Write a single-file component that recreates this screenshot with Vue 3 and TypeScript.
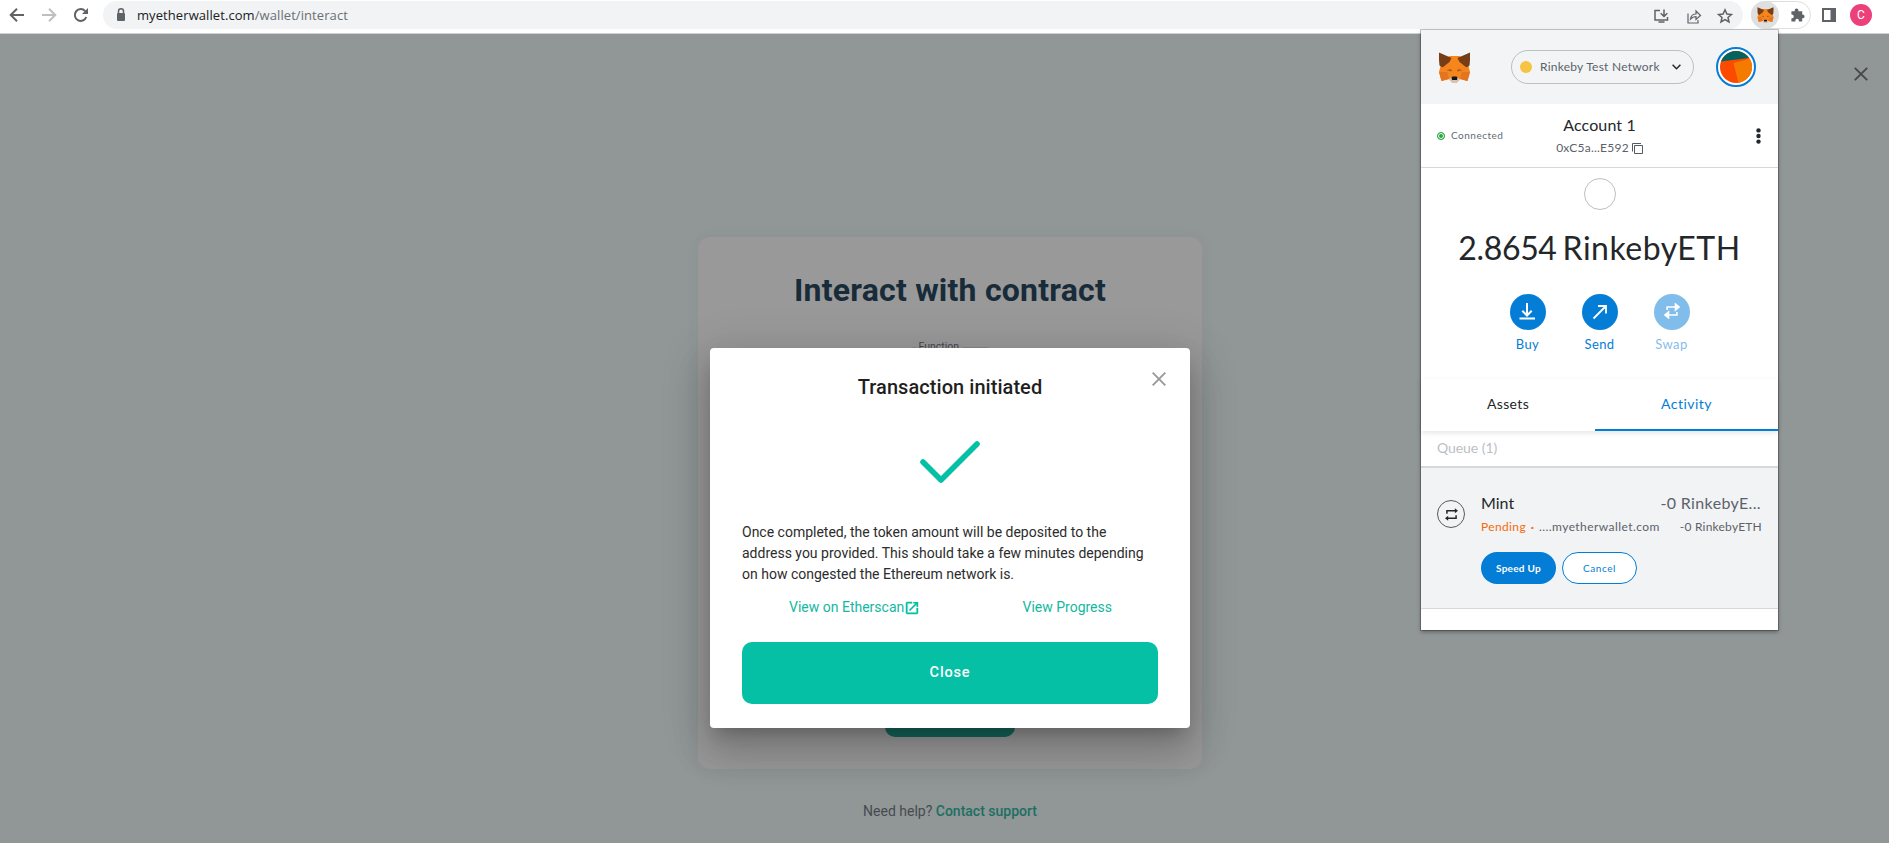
<script setup lang="ts">
interface WalletAction { label: string; icon: string; disabled?: boolean; cls: string }
const actions: WalletAction[] = [
  { label: 'Buy', icon: 'buy', cls: 'buy' },
  { label: 'Send', icon: 'send', cls: 'send' },
  { label: 'Swap', icon: 'swap', cls: 'swap', disabled: true },
]
const message: string[] = [
  'Once completed, the token amount will be deposited to the',
  'address you provided. This should take a few minutes depending',
  'on how congested the Ethereum network is.',
]
</script>

<template>
  <div class="screen">
    <svg class="defs" width="0" height="0" aria-hidden="true">
      <symbol id="fox" viewBox="0 0 33 31">
        <path d="M4 7 L12 4 H21 L29 7 L31 16 L32 20 L29.500 29 L22 27 L19 30.500 H14 L11 27 L3.500 29 L1 20 L2 16Z" fill="#f6851b" />
        <path d="M1 0.500 L13.500 6 L11.500 10 L4.500 15.500 L1.500 13.500 L1 8Z M32 0.500 L19.500 6 L21.500 10 L28.500 15.500 L31.500 13.500 L32 8Z" fill="#763d16" />
        <path d="M1 20 L9 19 L11 27 L3.500 29Z M32 20 L24 19 L22 27 L29.500 29Z" fill="#e4751f" />
        <path d="M4.500 15.500 L11 13 L9 20 L1 20Z M28.500 15.500 L22 13 L24 20 L32 20Z" fill="#f48420" />
        <path d="M8.500 18.500 L12 16.500 L14 19.500Z M24.500 18.500 L21 16.500 L19 19.500Z" fill="#cd6116" />
        <path d="M11 18.400 L13.500 17.600 L13.500 19.200Z M22 18.400 L19.500 17.600 L19.500 19.200Z" fill="#7a5a48" />
        <path d="M11 27 L14 25 H19 L22 27 L19 30.500 H14Z" fill="#d7c1b3" />
        <path d="M13.500 25.500 L14.500 24.500 H18.500 L19.500 25.500 L19 28 H14Z" fill="#161616" />
      </symbol>
      <symbol id="swap" viewBox="0 0 18 18">
        <path d="M3.500 8 V4.500 H14 M14.500 10 V13.500 H4" fill="none" stroke="currentColor" stroke-width="1.800" />
        <path d="M13 1.400 L16.800 4.500 L13 7.600Z M5 10.400 L1.200 13.500 L5 16.600Z" fill="currentColor" />
      </symbol>
    </svg>

    <header class="toolbar">
      <svg class="nav" width="92" height="30" viewBox="0 0 92 30" fill="none" stroke-width="2">
        <path d="M24 15 H11.500 M17 8.700 L10.700 15 L17 21.300" stroke="#5f6368" />
        <path d="M42 15 H54.500 M49 8.700 L55.300 15 L49 21.300" stroke="#bdc0c3" />
        <path d="M86.300 17 A5.900 5.900 0 1 1 85.200 11.100" stroke="#5f6368" />
        <path d="M88 8 V14 H82Z" fill="#5f6368" />
      </svg>
      <div class="omnibox">
        <svg width="10" height="14" viewBox="0 0 10 14">
          <rect x="1" y="5" width="8" height="8" rx="1" fill="#5f6368" />
          <path d="M2.500 5 V3.300 a2.500 2.500 0 0 1 5 0 V5" fill="none" stroke="#5f6368" stroke-width="1.500" />
        </svg>
        <span class="url"><b>myetherwallet.com</b>/wallet/interact</span>
        <svg class="omni-icons" width="82" height="20" viewBox="0 0 82 20" fill="none" stroke="#5f6368" stroke-width="1.500">
          <path d="M8 4.500 H3 V14 H15.500 V11 M6.500 16 H12.500 M12 3.500 V9.500 M8.700 7.200 L12 10.500 L15.300 7.200" />
          <path d="M36 7.500 V17 H46 V14 M38.500 13 C39 9.500 41 8 44 8 V5 L48.500 9.500 L44 13.500 V10.700 C41.500 10.700 40 11.300 38.500 13Z" stroke-width="1.200" />
          <path d="M73 3.800 L74.900 8.100 L79.400 8.500 L76 11.500 L77 16 L73 13.600 L69 16 L70 11.500 L66.600 8.500 L71.100 8.100Z" />
        </svg>
      </div>
      <div class="extensions">
        <span class="ext-active"><svg width="17" height="16"><use href="#fox" /></svg></span>
        <svg width="15" height="16" viewBox="0 0 16 16" fill="#5f6368">
          <path d="M1.500 4 H5 V3 a2 2 0 0 1 4 0 V4 H13 V7.500 H13.500 a2 2 0 0 1 0 4 H13 V15 H9.500 V14 a1.900 1.900 0 0 0 -3.800 0 V15 H1.500 V11.500 H2 a2 2 0 0 0 0 -4 H1.500Z" />
        </svg>
      </div>
      <svg class="panel-icon" width="14" height="14" viewBox="0 0 14 14"><path d="M0 0 H14 V14 H0Z M2 2 V12 H8.500 V2Z" fill="#5f6368" fill-rule="evenodd" /></svg>
      <span class="profile">C</span>
    </header>

    <main class="page">
      <section class="card">
        <h1>Interact with contract</h1>
        <fieldset class="field"><legend>Function</legend></fieldset>
        <div class="proceed"></div>
      </section>
      <p class="help">Need help? <b>Contact support</b></p>

      <svg class="page-close" width="14" height="14" viewBox="0 0 14 14"><path d="M0.800 0.800 L13.200 13.200 M13.200 0.800 L0.800 13.200" stroke="#484848" stroke-width="1.900" /></svg>

      <section class="modal">
        <h2>Transaction initiated</h2>
        <svg class="modal-close" width="14" height="14" viewBox="0 0 14 14"><path d="M0.700 0.700 L13.300 13.300 M13.300 0.700 L0.700 13.300" stroke="#999" stroke-width="1.900" /></svg>
        <svg class="check" width="60" height="42" viewBox="0 0 60 42"><path d="M3 21 L21 39 L57 3" fill="none" stroke="#05c0a5" stroke-width="5.600" stroke-linecap="round" stroke-linejoin="round" /></svg>
        <div class="message"><div v-for="line in message" :key="line">{{ line }}</div></div>
        <div class="links">
          <a>View on Etherscan<svg width="16" height="16" viewBox="0 0 24 24" fill="#05c0a5"><path d="M14 3V5H17.590L7.760 14.830L9.170 16.240L19 6.410V10H21V3M19 19H5V5H12V3H5C3.890 3 3 3.900 3 5V19A2 2 0 0 0 5 21H19A2 2 0 0 0 21 19V12H19V19Z" stroke="#05c0a5" stroke-width=".7" /></svg></a>
          <a>View Progress</a>
        </div>
        <button class="close-btn">Close</button>
      </section>
    </main>

    <aside class="wallet">
      <header class="w-head">
        <svg class="w-fox" width="33" height="31"><use href="#fox" /></svg>
        <div class="network">
          <i></i><span>Rinkeby Test Network</span>
          <svg width="9" height="6" viewBox="0 0 9 6"><path d="M0.600 0.800 L4.500 4.700 L8.400 0.800" fill="none" stroke="#24272a" stroke-width="1.500" /></svg>
        </div>
        <svg class="identicon" width="40" height="40" viewBox="0 0 40 40">
          <defs><clipPath id="disc"><circle cx="20" cy="20" r="16" /></clipPath></defs>
          <circle cx="20" cy="20" r="19" fill="#fff" stroke="#037dd6" stroke-width="2" />
          <g clip-path="url(#disc)">
            <rect width="40" height="40" fill="#fc4b00" />
            <path d="M0 0 H40 V9 L29 11.500 L0 15Z" fill="#05625c" />
            <path d="M17.500 16 L33 12 L42 11 V38 L23 38Z" fill="#f57b00" />
          </g>
        </svg>
      </header>
      <div class="w-menu">
        <div class="connected"><i></i><span>Connected</span></div>
        <div class="account">
          <div class="name">Account 1</div>
          <div class="address"><span>0xC5a...E592</span><svg width="11" height="11" viewBox="0 0 11 11" fill="none" stroke="#535a61"><path d="M0.500 8.500 V0.500 H9 M2.500 2.500 H10.500 V10.500 H2.500Z" /></svg></div>
        </div>
        <svg class="kebab" width="5" height="16" viewBox="0 0 5 16" fill="#24272a"><circle cx="2.500" cy="2.400" r="2.200" /><circle cx="2.500" cy="8" r="2.200" /><circle cx="2.500" cy="13.600" r="2.200" /></svg>
      </div>
      <div class="overview">
        <div class="token"></div>
        <div class="balance"><span class="amount">2.8654</span><span class="unit">RinkebyETH</span></div>
        <div class="actions">
          <div v-for="a in actions" :key="a.label" class="action" :class="{ off: a.disabled }">
            <span class="disc">
              <svg width="18" height="18" viewBox="0 0 18 18" fill="none" stroke="currentColor" stroke-width="2">
                <path v-if="a.icon === 'buy'" d="M8 0 V12 M3.300 7.800 L8 12.500 L12.700 7.800 M0.500 15.500 H16" />
                <path v-else-if="a.icon === 'send'" d="M2.500 15.500 L14 4 M7 3 H15 V10.500" stroke-width="1.800" />
                <use v-else href="#swap" width="16" height="16" x="1" y="0" />
              </svg>
            </span>
            <span :class="a.cls">{{ a.label }}</span>
          </div>
        </div>
      </div>
      <nav class="tabs"><span class="tab assets">Assets</span><span class="tab activity">Activity</span></nav>
      <div class="queue">Queue (1)</div>
      <div class="tx">
        <span class="tx-icon"><svg width="15" height="15"><use href="#swap" /></svg></span>
        <div class="tx-body">
          <div class="tx-title"><span>Mint</span><span class="primary">-0 RinkebyE...</span></div>
          <div class="tx-sub"><span class="pending">Pending</span><span class="sep">·</span><span class="origin">....myetherwallet.com</span><span class="secondary">-0 RinkebyETH</span></div>
          <div class="tx-buttons"><button class="speed">Speed Up</button><button class="cancel">Cancel</button></div>
        </div>
      </div>
    </aside>
  </div>
</template>

<style>
body { margin: 0; overflow: hidden; }
</style>

<style scoped>
.screen { position: relative; height: 843px; overflow: hidden; display: flex; flex-direction: column; font-family: Roboto, sans-serif; }
.screen * { box-sizing: border-box; }
.defs { position: absolute; }
h1, h2, p { margin: 0; }
button { border: 0; padding: 0; font-family: inherit; }
svg { display: block; flex: none; }

.toolbar { height: 34px; flex: none; display: flex; align-items: flex-start; background: #fff; border-bottom: 1px solid #d0d2d3; }
.nav { margin-right: 11px; }
.omnibox { width: 1640px; height: 28px; margin-top: 1px; border-radius: 14px; background: #f1f3f4; display: flex; align-items: center; padding: 0 9px 0 13px; }
.url { margin-left: 11px; padding-bottom: 1px; font: 13px/20px "Open Sans", sans-serif; letter-spacing: .08px; color: #6b6f74; }
.url b { font-weight: 400; color: #202124; }
.omni-icons { margin-left: auto; margin-top: 1px; }
.extensions { width: 60px; height: 28px; margin: 1px 0 0 8px; border: 1px solid #dddfe1; border-radius: 14px; display: flex; align-items: center; gap: 11px; }
.ext-active { width: 28px; height: 28px; margin-left: -1px; border-radius: 50%; background: #dedfe1; display: grid; place-items: center; }
.panel-icon { margin: 8px 14px 0 11px; }
.profile { width: 22px; height: 22px; margin-top: 4px; border-radius: 50%; background: #ec407a; color: #fff; font-size: 12px; line-height: 22px; text-align: center; }

.page { position: relative; flex: 1; width: 1900px; background: #919696; display: flex; flex-direction: column; align-items: center; padding-top: 203px; }
.card { width: 504px; height: 532px; border-radius: 12px; background: #999; box-shadow: 0 0 16px rgba(0, 20, 25, .04); display: flex; flex-direction: column; align-items: center; padding-top: 31px; }
h1 { font-size: 32px; line-height: 44px; font-weight: 700; letter-spacing: .22px; color: #182b39; }
.field { width: 87px; height: 60px; margin: 29px 0 0; padding: 0 0 0 8px; border: 1px solid #858789; border-radius: 8px; }
.field legend { padding: 0 3px; font-size: 10.500px; line-height: 12px; color: #42464f; }
.proceed { width: 130px; height: 60px; margin-top: auto; margin-bottom: 32px; border-radius: 10px; background: #15695d; }
.help { margin-top: 31px; font-size: 14px; line-height: 22px; color: #454b50; }
.help b { font-weight: 500; color: #1d6f64; }
.page-close { position: absolute; left: 1854px; top: 33px; }

.modal { position: absolute; left: 710px; top: 314px; width: 480px; height: 380px; padding: 24px 32px; border-radius: 4px; background: #fff; display: flex; flex-direction: column; align-items: center; box-shadow: 0 11px 15px -7px rgba(0, 0, 0, .2), 0 24px 38px 3px rgba(0, 0, 0, .14), 0 9px 46px 8px rgba(0, 0, 0, .12); }
h2 { font-size: 20px; line-height: 30px; font-weight: 500; letter-spacing: .05px; color: #1f1f1f; }
.modal-close { position: absolute; right: 24px; top: 24px; }
.check { margin-top: 39px; }
.message { align-self: stretch; margin-top: 39px; font-size: 14px; line-height: 21px; color: #2c2c2c; white-space: nowrap; }
.links { align-self: stretch; margin-top: 12px; display: flex; justify-content: space-between; padding: 0 46px 0 47px; font-size: 14px; line-height: 21px; }
.links a { display: flex; align-items: center; color: #14b79f; }
.close-btn { align-self: stretch; flex: none; height: 62px; margin-top: 24px; padding-bottom: 2px; border-radius: 10px; background: #05c0a5; color: #fff; font-size: 14.500px; font-weight: 500; letter-spacing: .85px; }

.wallet { position: absolute; left: 1421px; top: 30px; width: 357px; height: 600px; background: #fff; font-family: Lato, sans-serif; color: #24272a; box-shadow: 0 0 0 1px rgba(0, 0, 0, .22), 0 2px 4px rgba(0, 0, 0, .35); display: flex; flex-direction: column; }
.w-head { height: 74px; flex: none; background: #f2f4f6; display: flex; align-items: center; padding-left: 17px; }
.network { width: 183px; height: 34px; margin-left: 40px; border: 1px solid #bbc0c5; border-radius: 17px; display: flex; align-items: center; padding-left: 8px; font-size: 12px; letter-spacing: .24px; color: #5b6269; }
.network span { padding-bottom: 1px; }
.network i { width: 12px; height: 12px; border-radius: 50%; background: #f6c343; margin-right: 8px; }
.network svg { margin-left: 12px; }
.identicon { margin-left: 22px; }
.w-menu { height: 64px; flex: none; border-bottom: 1px solid #d6d9dc; display: grid; grid-template-columns: 1fr 100px 1fr; align-items: start; }
.connected { display: flex; align-items: center; gap: 6px; margin: 25px 0 0 16px; font-size: 10px; line-height: 13px; letter-spacing: .5px; color: #646b72; }
.connected span { padding-bottom: 1px; }
.connected i { width: 8px; height: 8px; border: 1px solid #28a745; border-radius: 50%; background: #28a745; box-shadow: inset 0 0 0 1px #fff; }
.account { padding-top: 10px; text-align: center; white-space: nowrap; }
.name { font-size: 16px; line-height: 22px; letter-spacing: .12px; }
.address { display: flex; align-items: center; justify-content: center; gap: 3px; margin-top: 3px; font-size: 12px; line-height: 17px; letter-spacing: .22px; color: #5b6269; }
.address svg { margin-top: 2px; }
.kebab { justify-self: end; margin: 24px 17px 0 0; }
.overview { height: 211px; flex: none; display: flex; flex-direction: column; align-items: center; padding-top: 10px; }
.token { width: 32px; height: 32px; border: 1px solid #bbc0c5; border-radius: 50%; flex: none; }
.balance { display: flex; gap: 6px; margin-top: 17px; font-size: 32px; line-height: 42px; }
.amount { letter-spacing: -.35px; }
.unit { letter-spacing: .5px; }
.actions { display: flex; gap: 36px; margin-top: 25px; }
.action { width: 36px; display: flex; flex-direction: column; align-items: center; gap: 5px; font-size: 13px; line-height: 18px; color: #037dd6; }
.disc { width: 36px; height: 36px; border-radius: 50%; background: #037dd6; color: #fff; display: grid; place-items: center; flex: none; }
.off { opacity: .5; }
.send, .swap, .buy { letter-spacing: .4px; }
.tabs { height: 52px; flex: none; display: flex; box-shadow: 0 2px 5px rgba(0, 0, 0, .1); }
.tab { font-size: 14px; line-height: 50px; text-align: center; letter-spacing: .35px; }
.assets { width: 174px; }
.activity { width: 183px; border-bottom: 2px solid #037dd6; color: #037dd6; letter-spacing: .45px; }
.queue { height: 37px; flex: none; padding: 7px 0 0 16px; border-bottom: 2px solid #d6d9dc; font-size: 14px; line-height: 20px; letter-spacing: -.06px; color: #bbc0c5; }
.tx { height: 141px; flex: none; background: #f2f3f5; border-bottom: 1px solid #d6d9dc; display: flex; padding: 24px 16px 0; }
.tx-icon { width: 28px; height: 28px; margin: 8px 16px 0 0; border: 1px solid #535a61; border-radius: 50%; display: grid; place-items: center; flex: none; }
.tx-body { flex: 1; }
.tx-title { display: flex; justify-content: space-between; font-size: 16px; line-height: 22px; }
.primary { letter-spacing: .36px; padding-right: 1px; color: #5b6269; }
.tx-sub { display: flex; margin-top: 4px; font-size: 12px; line-height: 17px; color: #5b6269; white-space: nowrap; }
.pending { color: #f66a0a; letter-spacing: .36px; }
.sep { color: #f66a0a; width: 13px; text-align: center; font-weight: 700; }
.origin { letter-spacing: .43px; }
.secondary { margin-left: auto; letter-spacing: .22px; }
.tx-buttons { display: flex; gap: 6px; margin-top: 17px; }
.tx-buttons button { width: 75px; height: 32px; border-radius: 16px; padding-bottom: 1px; font-size: 10px; }
.speed { background: #037dd6; color: #fff; font-weight: 700; letter-spacing: .28px; }
.tx-buttons .cancel { background: #fff; border: 1px solid #037dd6; color: #037dd6; letter-spacing: .55px; }
</style>
